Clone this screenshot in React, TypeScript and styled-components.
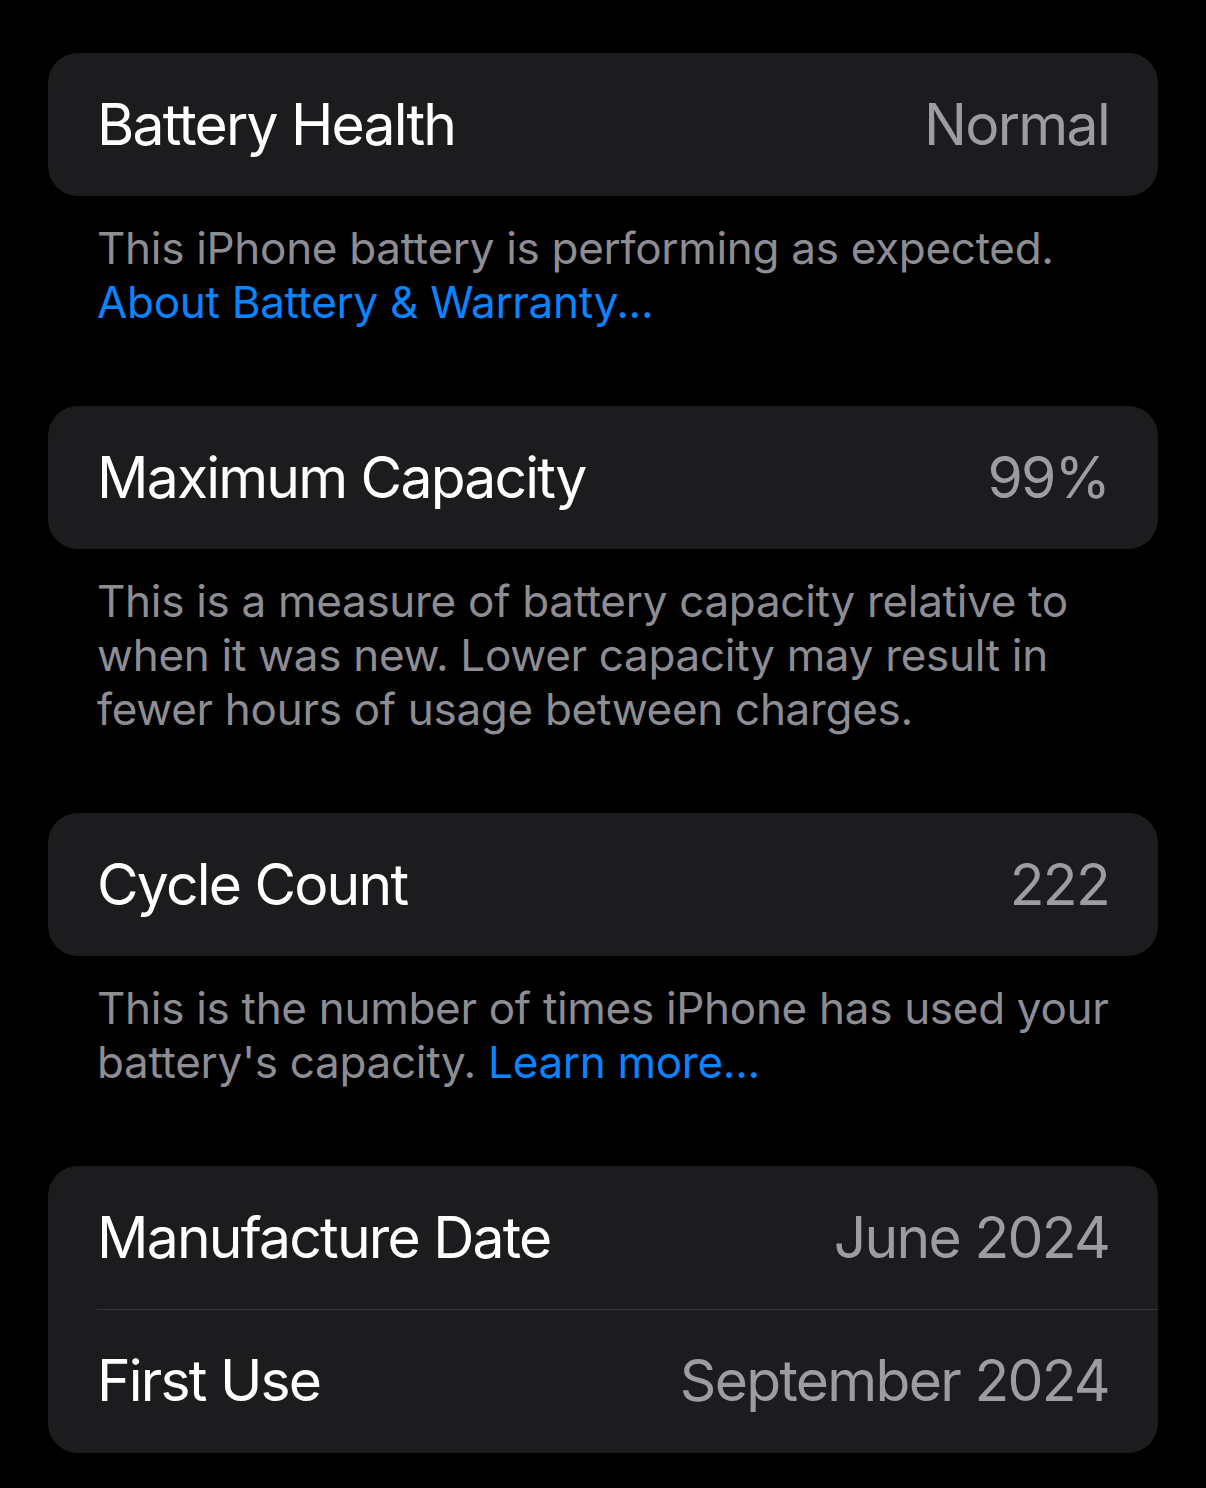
import React from 'react'
import styled, { createGlobalStyle } from 'styled-components'

const GlobalStyle = createGlobalStyle`
  html, body {
    margin: 0;
    padding: 0;
    background: #000000;
  }
  body {
    font-family: Inter, 'Liberation Sans', sans-serif;
    -webkit-font-smoothing: antialiased;
  }
`

interface RowData {
  label: string
  value: string
}

interface SectionData {
  rows: RowData[]
  footer?: React.ReactNode
}

function getSections(): SectionData[] {
  return [
    {
      rows: [{ label: 'Battery Health', value: 'Normal' }],
      footer: (
        <>
          This iPhone battery is performing as expected.
          <br />
          <Link>About Battery &amp; Warranty...</Link>
        </>
      ),
    },
    {
      rows: [{ label: 'Maximum Capacity', value: '99%' }],
      footer: (
        <>
          This is a measure of battery capacity relative to when it was new. Lower capacity may result
          in fewer hours of usage between charges.
        </>
      ),
    },
    {
      rows: [{ label: 'Cycle Count', value: '222' }],
      footer: (
        <>
          This is the number of times iPhone has used your battery's capacity. <Link>Learn more...</Link>
        </>
      ),
    },
    {
      rows: [
        { label: 'Manufacture Date', value: 'June 2024' },
        { label: 'First Use', value: 'September 2024' },
      ],
    },
  ]
}

export default function App() {
  const sections = getSections()

  return (
    <>
      <GlobalStyle />
      <Screen>
        {sections.map((section, i) => (
          <Section key={i}>
            <Card>
              {section.rows.map((row) => (
                <Row key={row.label}>
                  <Label>{row.label}</Label>
                  <Value>{row.value}</Value>
                </Row>
              ))}
            </Card>
            {section.footer && <Footer>{section.footer}</Footer>}
          </Section>
        ))}
      </Screen>
    </>
  )
}

const Screen = styled.div`
  display: flex;
  flex-direction: column;
  gap: 77px;
  width: 1206px;
  min-height: 1488px;
  padding: 53px 48px 0;
  box-sizing: border-box;
  background: #000000;
`

const Section = styled.section`
  display: flex;
  flex-direction: column;
`

const Card = styled.div`
  display: flex;
  flex-direction: column;
  background: #1c1c1e;
  border-radius: 30px;
  overflow: hidden;
`

const Row = styled.div`
  display: flex;
  align-items: center;
  justify-content: space-between;
  height: 143px;
  padding: 0 49px 0 49px;
  box-sizing: border-box;

  & + & {
    height: 144px;
    background-image: linear-gradient(#38383a, #38383a);
    background-size: calc(100% - 49px) 1px;
    background-position: right top;
    background-repeat: no-repeat;
  }
`

const Label = styled.span`
  font-size: 57px;
  line-height: 70px;
  color: #ffffff;
  letter-spacing: -1.8px;
`

const Value = styled.span`
  font-size: 57px;
  line-height: 70px;
  color: #9c9ca2;
  letter-spacing: -1.7px;
`

const Footer = styled.p`
  margin: 0;
  padding: 25px 49px 0;
  font-size: 44px;
  line-height: 54px;
  color: #8d8d93;
  letter-spacing: -0.3px;
`

const Link = styled.span`
  color: #0a84ff;
`
